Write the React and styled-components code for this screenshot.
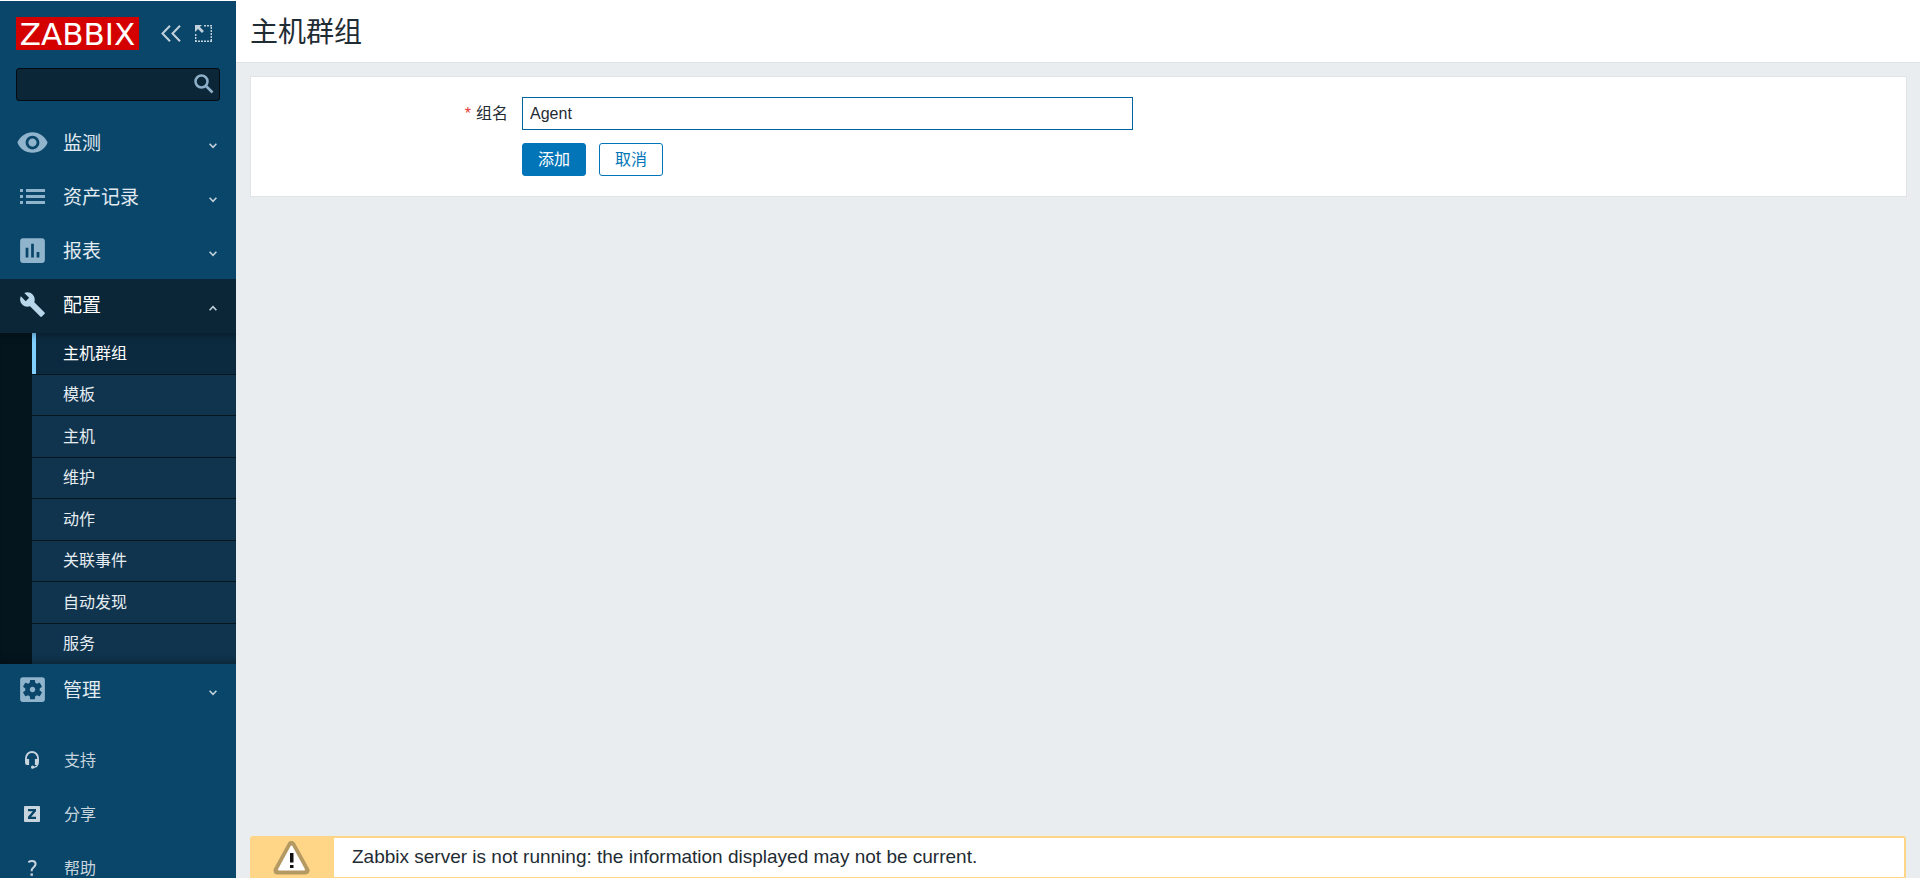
import React, { useState } from 'react'
import styled, { createGlobalStyle } from 'styled-components'
import { MdAssessment, MdBuild, MdSettingsApplications, MdVisibility } from 'react-icons/md'

const GlobalStyle = createGlobalStyle`
*{
    box-sizing:border-box;
}

body{
    margin:0;
    background-color:#e9edf0;
    color:#1f2c33;
    font-family:"Liberation Sans", "Noto Sans CJK SC", sans-serif;
    font-size:16px;
    line-height:24px;
}

button, input{
    font:inherit;
}

ul{
    margin:0;
    padding:0;
    list-style:none;
}
`

const Page = styled.div`
display:flex;
height:100vh;
padding-top:1px;
background-color:#fff;
overflow:hidden;
`

const Sidebar = styled.aside`
flex:0 0 236px;
background-color:#0a466a;
overflow:hidden;
`

const SidebarHeader = styled.div`
display:flex;
align-items:center;
padding:16px 16px 0;
`

const Logo = styled.a`
display:block;
width:123px;
height:33px;
margin-right:auto;
background-color:#d40000;
color:#fff;
font-family:"DejaVu Sans", sans-serif;
font-size:31px;
line-height:34px;
text-align:center;
text-decoration:none;
`

const IconButton = styled.button`
display:flex;
align-items:center;
justify-content:center;
width:33px;
height:33px;
padding:0;
border:0;
background:none;
color:#c2d1db;
`

const Search = styled.form`
display:flex;
height:33px;
margin:18px 16px 16px;
border:1px solid #020c12;
border-radius:3px;
background-color:#0a2637;

input{
    flex:1;
    min-width:0;
    padding:0 8px;
    border:0;
    outline:0;
    background:none;
    color:#fff;
}

button{
    height:31px;
    padding:0 0 1px 2px;
    color:#8dafc7;
}
`

const MenuLink = styled.a`
display:flex;
align-items:center;
height:54px;
padding:0 16px;
background-color:${props => props.$open ? '#0a2637' : 'transparent'};
color:${props => props.$open ? '#fff' : '#e2ebf1'};
font-size:19px;
text-decoration:none;

span{
    flex:1;
    margin-left:14px;
}
`

const MenuIcon = styled.div`
display:flex;
align-items:center;
justify-content:center;
width:33px;
height:33px;
margin-bottom:3px;
color:${props => props.$open ? '#b9d7eb' : '#8fb4cc'};
`

const Chevron = styled.svg`
margin:3px 3px 0 0;
color:#c2d1db;
transform:${props => props.$open ? 'rotate(180deg)' : 'none'};
`

const SubMenu = styled.ul`
position:relative;
display:flex;
flex-direction:column;
min-height:331px;
padding-left:32px;
background-color:#04151e;

&::after{
    content:"";
    position:absolute;
    inset:0;
    box-shadow:inset 0 10px 10px -10px rgba(0,0,0,0.5), inset 0 -10px 10px -10px rgba(0,0,0,0.5);
    pointer-events:none;
}

li{
    display:flex;
    flex:1;
    border-bottom:1px solid #05161f;
}

li:last-child{
    border-bottom:0;
}
`

const SubLink = styled.a`
display:flex;
flex:1;
align-items:center;
padding:1px 0 0 27px;
border-left:4px solid ${props => props.$selected ? '#80cfff' : '#10344d'};
background-color:${props => props.$selected ? '#0b2a3f' : '#10344d'};
color:${props => props.$selected ? '#fff' : '#e6edf2'};
text-decoration:none;
`

const UserMenu = styled.ul`
margin-top:16px;
`

const UserLink = styled.a`
display:flex;
align-items:center;
gap:16px;
height:54px;
padding-left:16px;
color:#c9d5de;
text-decoration:none;

svg{
    width:32px;
    margin-bottom:2px;
}
`

const Main = styled.main`
display:flex;
flex:1;
flex-direction:column;
min-width:0;
background-color:#e9edf0;
`

const Title = styled.header`
height:62px;
padding:11px 14px 0;
border-bottom:1px solid #dfe4e7;
background-color:#fff;

h1{
    margin:0;
    font-size:28px;
    font-weight:400;
    line-height:42px;
}
`

const Panel = styled.form`
display:grid;
grid-template-columns:15% 1fr;
gap:13px;
margin:13px 13px 13px 14px;
padding:20px 14px;
border:1px solid #dfe4e7;
background-color:#fff;
`

const Label = styled.label`
padding-right:1px;
line-height:33px;
text-align:right;

span{
    margin-right:5px;
    color:#e33734;
}
`

const TextInput = styled.input`
width:611px;
max-width:100%;
height:33px;
padding:0 7px;
border:1px solid #02659f;
outline:0;
color:#1f2c33;
`

const Actions = styled.div`
display:flex;
grid-column:2;
gap:13px;
`

const Button = styled.button`
height:33px;
padding:1px 15px 0;
border:1px solid #0275b8;
border-radius:3px;
background-color:${props => props.$primary ? '#0275b8' : '#fff'};
color:${props => props.$primary ? '#fff' : '#0275b8'};
line-height:30px;
`

const Warning = styled.div`
display:flex;
height:43px;
margin:auto 14px -1px;
border:2px solid #ffd588;
border-radius:3px;
background-color:#fff;
font-size:19px;
line-height:38px;

p{
    margin:0;
    padding-left:18px;
}
`

const WarningIcon = styled.div`
display:flex;
align-items:center;
justify-content:center;
width:82px;
padding-right:3px;
background-color:#ffd588;
`

const menu = [
    { name: '监测', icon: <MdVisibility size={33} /> },
    { name: '资产记录', icon: <ListIcon /> },
    { name: '报表', icon: <MdAssessment size={33} /> },
    {
        name: '配置',
        icon: <MdBuild size={27} />,
        items: ['主机群组', '模板', '主机', '维护', '动作', '关联事件', '自动发现', '服务'],
    },
    { name: '管理', icon: <MdSettingsApplications size={33} /> },
]

function ListIcon() {
    return (
        <svg width="25" height="15" viewBox="0 0 25 15" fill="currentColor">
            <path d="M0 0h3v3H0zM6 0h19v3H6zM0 6h3v3H0zM6 6h19v3H6zM0 12h3v3H0zM6 12h19v3H6z" />
        </svg>
    )
}

function SupportIcon() {
    return (
        <svg width="32" height="18" viewBox="-8 0 32 18" fill="none" stroke="currentColor">
            <path d="M2 10V7a6 6 0 0 1 12 0v3" strokeWidth="1.8" />
            <path d="M1.100 8h4v6H3a2 2 0 0 1-1.900-2zM14.900 8h-4v6H13a2 2 0 0 0 1.900-2z" fill="currentColor" stroke="none" />
            <path d="M13.600 13c0 2.200-1.600 3.300-5 3.300" strokeWidth="1.4" />
            <circle cx="8.6" cy="16.2" r="1.6" fill="currentColor" stroke="none" />
        </svg>
    )
}

function ShareIcon() {
    return (
        <svg width="32" height="16" viewBox="-8 0 32 16">
            <rect width="16" height="16" rx="1" fill="currentColor" />
            <path d="M4 3h8v2.300L7.200 10.700H12V13H4v-2.300L8.800 5.300H4z" fill="#0a466a" />
        </svg>
    )
}

function HelpIcon() {
    return (
        <svg width="32" height="16" viewBox="-8 0 32 16" fill="none" stroke="currentColor" strokeWidth="2">
            <path d="M4.300 2.200C5.600 1.300 6.800 1 8 1c2.200 0 3.600 1.100 3.600 3 0 3-3.900 3.300-3.900 6.500v.7" />
            <path d="M7.700 13.400v2.400" strokeWidth="2.4" />
        </svg>
    )
}

export default function HostGroupEdit() {
    const [name, setName] = useState('Agent')

    return (
        <>
            <GlobalStyle />
            <Page>
                <Sidebar>
                    <SidebarHeader>
                        <Logo href="#">ZABBIX</Logo>
                        <IconButton aria-label="collapse sidebar">
                            <svg width="20" height="17" viewBox="0 0 20 17" fill="none" stroke="currentColor" strokeWidth="2">
                                <path d="M9 .8L1.500 8.500 9 16.200M19 .8L11.500 8.500 19 16.200" />
                            </svg>
                        </IconButton>
                        <IconButton aria-label="hide sidebar">
                            <svg width="17" height="17" viewBox="0 0 17 17" fill="none" stroke="currentColor">
                                <path d="M9 .7h8M16.300 2v15M.7 9v8M0 16.300h17" strokeWidth="1.4" strokeDasharray="2 1" />
                                <path d="M0 0h7L4.900 2.100l4 4-1.900 1.900-4-4L0 7z" fill="currentColor" stroke="none" />
                            </svg>
                        </IconButton>
                    </SidebarHeader>
                    <Search onSubmit={e => e.preventDefault()}>
                        <input type="text" aria-label="search" />
                        <IconButton aria-label="submit search">
                            <svg width="20" height="20" viewBox="0 0 20 20" fill="none" stroke="currentColor">
                                <circle cx="7.5" cy="7.5" r="6" strokeWidth="2.5" />
                                <path d="M12 12l6.500 6.500" strokeWidth="2.6" />
                            </svg>
                        </IconButton>
                    </Search>
                    <nav>
                        <ul>
                            {menu.map(section => (
                                <li key={section.name}>
                                    <MenuLink href="#" $open={!!section.items}>
                                        <MenuIcon $open={!!section.items}>{section.icon}</MenuIcon>
                                        <span>{section.name}</span>
                                        <Chevron $open={!!section.items} width="8" height="6" viewBox="0 0 8 6" fill="none" stroke="currentColor" strokeWidth="1.6">
                                            <path d="M.6.8L4 4.300 7.400.8" />
                                        </Chevron>
                                    </MenuLink>
                                    {section.items && (
                                        <SubMenu>
                                            {section.items.map((item, i) => (
                                                <li key={item}><SubLink href="#" $selected={i === 0}>{item}</SubLink></li>
                                            ))}
                                        </SubMenu>
                                    )}
                                </li>
                            ))}
                        </ul>
                    </nav>
                    <UserMenu>
                        <li><UserLink href="#"><SupportIcon />支持</UserLink></li>
                        <li><UserLink href="#"><ShareIcon />分享</UserLink></li>
                        <li><UserLink href="#"><HelpIcon />帮助</UserLink></li>
                    </UserMenu>
                </Sidebar>
                <Main>
                    <Title><h1>主机群组</h1></Title>
                    <Panel onSubmit={e => e.preventDefault()}>
                        <Label htmlFor="name"><span>*</span>组名</Label>
                        <div>
                            <TextInput id="name" type="text" value={name} onChange={e => setName(e.target.value)} />
                        </div>
                        <Actions>
                            <Button type="submit" $primary>添加</Button>
                            <Button type="button">取消</Button>
                        </Actions>
                    </Panel>
                    <Warning role="status">
                        <WarningIcon>
                            <svg width="37" height="34" viewBox="0 0 37 34">
                                <path d="M18.500 4L32.500 29.500h-28z" fill="#b49a62" stroke="#b49a62" strokeWidth="8" strokeLinejoin="round" />
                                <path d="M18.500 5.500L31 28.500h-25z" fill="#fff" stroke="#fff" strokeWidth="2" strokeLinejoin="round" />
                                <path d="M17 12h3.500v9.500H17zM17 24h3.500v3H17z" fill="#111" />
                            </svg>
                        </WarningIcon>
                        <p>Zabbix server is not running: the information displayed may not be current.</p>
                    </Warning>
                </Main>
            </Page>
        </>
    )
}
